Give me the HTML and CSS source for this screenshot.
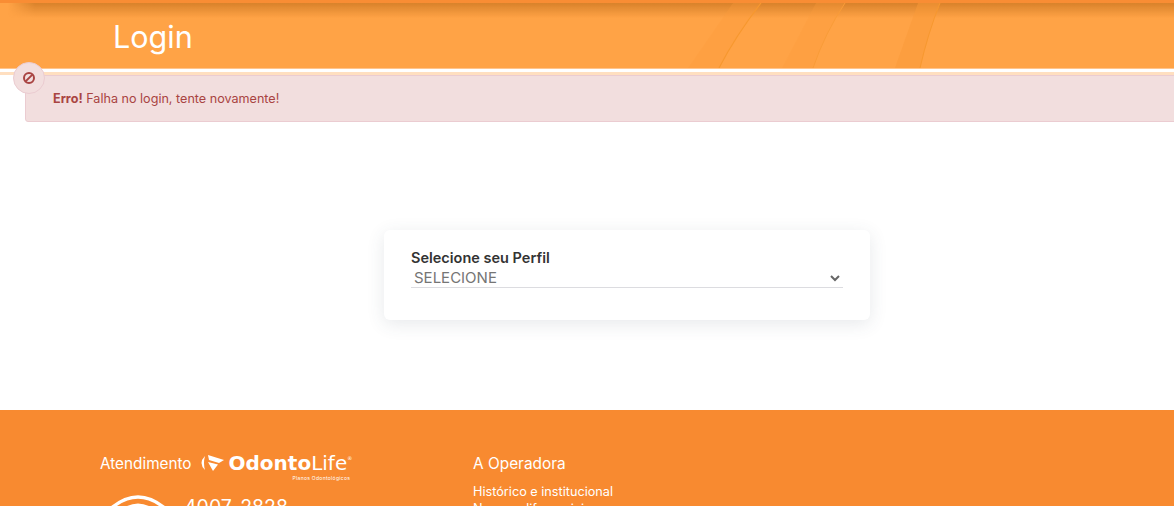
FILE: index.html
```html
<!DOCTYPE html>
<html lang="pt-BR">

<head>
    <meta charset="UTF-8" />
    <meta name="viewport" content="width=device-width, initial-scale=1.0" />
    <title>Login</title>
    <link rel="stylesheet" href="styles.css">
</head>

<body>
    <div class="page">
        <header class="page-header">
            <svg class="header-stripes" viewBox="0 0 1174 65" preserveAspectRatio="none" aria-hidden="true">
                <path d="M733 0 L761 0 Q735 34 719 65 L688 65 Z" fill="#fb9d3d" opacity="0.3" />
                <path d="M761 0 Q735 34 719 65" stroke="#f7982f" stroke-width="1.2" fill="none" />
                <path d="M816 0 L845 0 Q825 30 813 65 L782 65 Z" fill="#fb9d3d" opacity="0.3" />
                <path d="M845 0 Q825 30 813 65" stroke="#f99c38" stroke-width="1" fill="none" />
                <path d="M918 0 L940 0 Q928 30 920 65 L895 65 Z" fill="#fa9a38" opacity="0.5" />
                <path d="M940 0 Q928 30 920 65" stroke="#f7982f" stroke-width="1" fill="none" />
            </svg>
            <h1>Login</h1>
        </header>

        <main class="content">
            <div class="alert">
                <span class="alert-icon">
                    <svg width="14" height="14" viewBox="0 0 14 14" aria-hidden="true">
                        <circle cx="7" cy="7" r="5" fill="none" stroke="#a94442" stroke-width="2" />
                        <path d="M3.6 10.4 L10.4 3.6" stroke="#a94442" stroke-width="2" />
                    </svg>
                </span>
                <strong>Erro!</strong> Falha no login, tente novamente!
            </div>

            <form class="profile-card">
                <label for="perfil">Selecione seu Perfil</label>
                <div class="select-wrap">
                    <select id="perfil">
                        <option>SELECIONE</option>
                    </select>
                    <svg class="select-arrow" width="10" height="7" viewBox="0 0 10 7" aria-hidden="true">
                        <path d="M1 1 L5 5 L9 1" fill="none" stroke="#666" stroke-width="2" />
                    </svg>
                </div>
            </form>
        </main>

        <footer class="page-footer">
            <div class="footer-contact">
                <div class="contact-title">
                    <span>Atendimento</span>
                    <span class="logo">
                        <svg width="25" height="17" viewBox="0 0 25 17" aria-hidden="true">
                            <path d="M5 1 Q-2 8 5 15 Q3 8 5 1 Z" fill="#fff" />
                            <path d="M8 0 L24 5 L19 8 L9 5 Z" fill="#fff" />
                            <path d="M8 7 L18 9.5 L13 16 Z" fill="#fff" />
                        </svg>
                        <span class="logo-text">
                            <span class="logo-name"><b>Odonto</b>Life<sup>®</sup></span>
                            <span class="logo-sub">Planos Odontológicos</span>
                        </span>
                    </span>
                </div>
                <div class="contact-phone">
                    <svg class="phone-icon" width="66" height="40" viewBox="0 0 66 40" aria-hidden="true">
                        <path d="M3 20 Q33 -8 63 20" fill="none" stroke="#fff" stroke-width="3.5" />
                        <path d="M12 24 Q33 4 54 24" fill="none" stroke="#fff" stroke-width="3" />
                    </svg>
                    <span>4007-2828</span>
                </div>
            </div>
            <div class="footer-links">
                <h2>A Operadora</h2>
                <a href="#">Histórico e institucional</a>
                <a href="#">Nossos diferenciais</a>
            </div>
        </footer>
    </div>
</body>

</html>
```

FILE: styles.css
```css
html,
body {
    margin: 0;
    padding: 0;
    height: 100%;
    overflow: hidden;
}

body {
    font-family: Inter, Arial, sans-serif;
    background: #fff;
    color: #333;
}

.page {
    height: 506px;
    overflow: hidden;
}

.page-header {
    position: relative;
    height: 66px;
    background: #ffa346;
    border-top: 3px solid #f98d34;
    border-bottom: 3px solid #fff;
    box-shadow: 0 3px 0 #ffdfc0;
}

.page-header::before {
    content: "";
    position: absolute;
    left: 0;
    right: 0;
    top: 0;
    height: 15px;
    background: linear-gradient(rgba(170, 90, 10, 0.45), rgba(170, 90, 10, 0));
    -webkit-mask-image: linear-gradient(to right, transparent 8px, #000 35px);
    mask-image: linear-gradient(to right, transparent 8px, #000 35px);
}

.page-header::after {
    content: "";
    position: absolute;
    left: 0;
    right: 0;
    bottom: 0;
    height: 1px;
    background: #ffc48c;
}

.header-stripes {
    position: absolute;
    left: 0;
    top: 0;
    width: 100%;
    height: 65px;
}

.page-header h1 {
    position: relative;
    margin: 0;
    padding: 15px 0 0 113px;
    font-size: 30.5px;
    font-weight: 400;
    line-height: 38px;
    color: #fff;
}

.content {
    width: 1204px;
    height: 335px;
    margin-left: 25px;
    padding-top: 3px;
}

.alert {
    position: relative;
    box-sizing: border-box;
    height: 47px;
    padding: 15px 27px;
    background: #f2dede;
    border: 1px solid #ebccd1;
    border-radius: 3px;
    color: #a94442;
    font-size: 12.6px;
    line-height: 16px;
}

.alert-icon {
    position: absolute;
    left: -13px;
    top: -14px;
    width: 30px;
    height: 30px;
    display: flex;
    align-items: center;
    justify-content: center;
    background: #f2dede;
    border: 1px solid #ebccd1;
    border-radius: 50%;
}

.profile-card {
    box-sizing: border-box;
    width: 486px;
    height: 90px;
    margin: 108px auto 0;
    padding: 19px 27px;
    background: #fff;
    border-radius: 6px;
    box-shadow: 0 4px 18px rgba(60, 70, 90, 0.12);
}

.profile-card label {
    display: block;
    font-size: 14.5px;
    font-weight: 600;
    line-height: 18px;
    color: #333;
}

.select-wrap {
    position: relative;
}

.select-wrap select {
    display: block;
    width: 100%;
    height: 21px;
    padding: 0 3px;
    border: 0;
    border-bottom: 1px solid #dcdce0;
    border-radius: 0;
    background: transparent;
    color: #757575;
    font-family: Inter, Arial, sans-serif;
    font-size: 15px;
    appearance: none;
    outline: none;
}

.select-arrow {
    position: absolute;
    right: 3px;
    top: 8px;
}

.page-footer {
    display: flex;
    height: 200px;
    background: #f88a30;
    color: #fff;
    padding: 44px 0 0 100px;
    box-sizing: border-box;
}

.footer-contact {
    width: 373px;
}

.contact-title {
    display: flex;
    align-items: flex-start;
    gap: 8px;
    height: 26px;
    font-size: 15.3px;
    line-height: 20px;
}

.logo {
    display: flex;
    align-items: flex-start;
    gap: 4px;
    margin-top: 1px;
}

.logo-text {
    display: flex;
    flex-direction: column;
    align-items: flex-end;
}

.logo-name {
    font-family: "DejaVu Sans", Arial, sans-serif;
    font-size: 20px;
    line-height: 17px;
    white-space: nowrap;
}

.logo-name b {
    font-weight: 700;
}

.logo-name sup {
    font-size: 5px;
    vertical-align: top;
    line-height: 6px;
}

.logo-sub {
    margin: 3px 2px 0 0;
    font-size: 5px;
    line-height: 6px;
    letter-spacing: 0.3px;
}

.contact-phone {
    display: flex;
    align-items: flex-start;
    gap: 13px;
    margin: 10px 0 0 5px;
    font-size: 19.5px;
    line-height: 24px;
}

.phone-icon {
    margin-top: 1px;
}

.contact-phone span {
    margin-top: 5px;
}

.footer-links h2 {
    margin: 0 0 9px;
    font-size: 15.4px;
    font-weight: 400;
    line-height: 20px;
}

.footer-links a {
    display: block;
    color: #fff;
    text-decoration: none;
    font-size: 12.7px;
    line-height: 17px;
}
```
